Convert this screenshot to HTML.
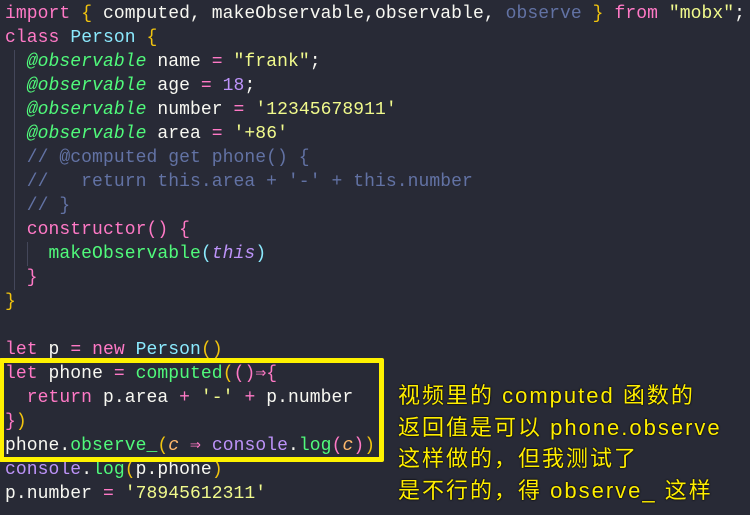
<!DOCTYPE html>
<html><head><meta charset="utf-8"><style>
body{margin:0;width:750px;height:515px;background:#282a36;overflow:hidden;position:relative}
pre{margin:0;position:absolute;left:5px;top:2px;font-family:"Liberation Mono",monospace;font-size:18px;letter-spacing:0.08px;line-height:24px;color:#f8f8f2}
.k{color:#ff79c6}.c{color:#8be9fd}.s{color:#f1fa8c}.n{color:#bd93f9}.cm{color:#6272a4}.f{color:#50fa7b}
.i{font-style:italic}.y{color:#f1c40f}.p{color:#ff79c6}.b{color:#8be9fd}.o{color:#ffb86c}
.g{position:absolute;width:1px;background:#44475a}
.box{position:absolute;left:-1px;top:358px;width:375px;height:94px;border:5px solid #fff200;border-radius:2px}
.note{position:absolute;left:398px;top:380px;font-family:"Liberation Sans","Noto Sans CJK SC",sans-serif;font-size:22px;line-height:31.7px;color:#ffee00;letter-spacing:2px;text-shadow:0 0 2px #000,0 0 1px #000;white-space:pre}
</style></head><body>
<div class="g" style="left:14px;top:50px;height:240px"></div>
<div class="g" style="left:27px;top:242px;height:24px"></div>
<pre><span class="k">import</span> <span class="y">{</span> computed, makeObservable,observable, <span class="cm">observe</span> <span class="y">}</span> <span class="k">from</span> <span class="s">"mobx"</span>;
<span class="k">class</span> <span class="c">Person</span> <span class="y">{</span>
  <span class="f i">@observable</span> name <span class="k">=</span> <span class="s">"frank"</span>;
  <span class="f i">@observable</span> age <span class="k">=</span> <span class="n">18</span>;
  <span class="f i">@observable</span> number <span class="k">=</span> <span class="s">'12345678911'</span>
  <span class="f i">@observable</span> area <span class="k">=</span> <span class="s">'+86'</span>
  <span class="cm">// @computed get phone() {</span>
  <span class="cm">//   return this.area + '-' + this.number</span>
  <span class="cm">// }</span>
  <span class="k">constructor</span><span class="p">()</span> <span class="p">{</span>
    <span class="f">makeObservable</span><span class="b">(</span><span class="n i">this</span><span class="b">)</span>
  <span class="p">}</span>
<span class="y">}</span>

<span class="k">let</span> p <span class="k">=</span> <span class="k">new</span> <span class="c">Person</span><span class="y">()</span>
<span class="k">let</span> phone <span class="k">=</span> <span class="f">computed</span><span class="y">(</span><span class="p">()</span><span class="k">⇒</span><span class="p">{</span>
  <span class="k">return</span> p.area <span class="k">+</span> <span class="s">'-'</span> <span class="k">+</span> p.number
<span class="p">}</span><span class="y">)</span>
phone.<span class="f">observe_</span><span class="y">(</span><span class="o i">c</span> <span class="k">⇒</span> <span class="n">console</span>.<span class="f">log</span><span class="p">(</span><span class="o i">c</span><span class="p">)</span><span class="y">)</span>
<span class="n">console</span>.<span class="f">log</span><span class="y">(</span>p.phone<span class="y">)</span>
p.number <span class="k">=</span> <span class="s">'78945612311'</span></pre>
<div class="box"></div>
<div class="note">视频里的 computed 函数的
返回值是可以 phone.observe
这样做的，但我测试了
是不行的，得 observe_ 这样</div>
</body></html>
